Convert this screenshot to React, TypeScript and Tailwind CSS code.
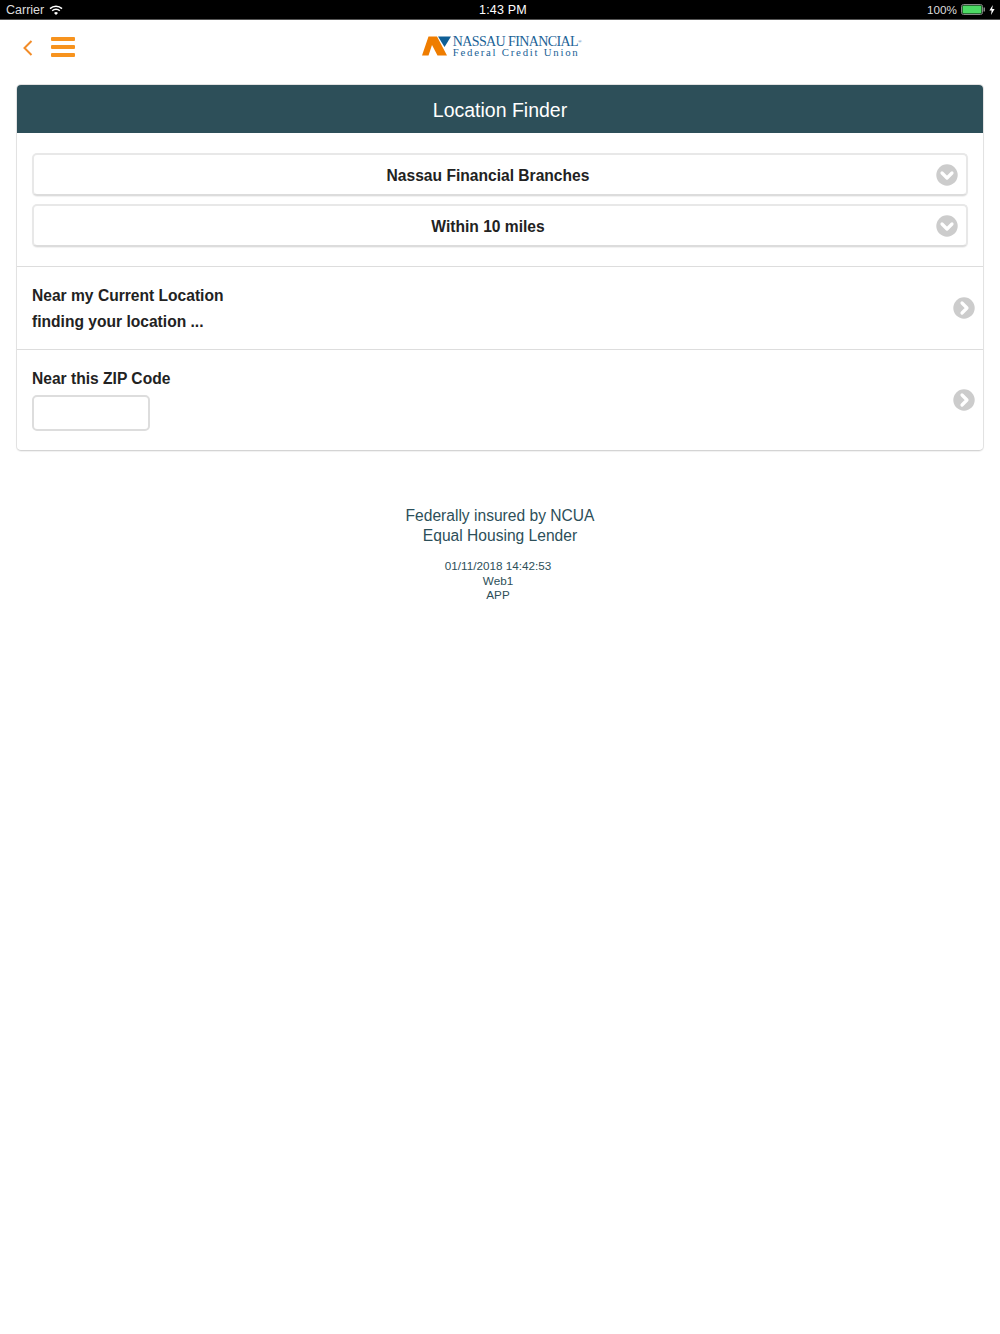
const sans = "font-['Liberation_Sans',Arial,sans-serif]";

function CircleIcon({ dir }: { dir: "down" | "right" }) {
  return (
    <svg width="22" height="22" viewBox="0 0 22 22" className="shrink-0">
      <circle cx="11" cy="11" r="10.7" fill="#cccccc" />
      <path
        d={dir === "down" ? "M6 9 L11 14 L16 9" : "M9 6 L14 11 L9 16"}
        fill="none"
        stroke="#ffffff"
        strokeWidth="3.2"
        strokeLinecap="round"
        strokeLinejoin="round"
      />
    </svg>
  );
}

function SelectBox({ label }: { label: string }) {
  return (
    <div className="h-[43px] rounded-[5px] border-2 border-[#e8e8e8] border-b-[#dcdcdc] shadow-[0_1px_1px_rgba(0,0,0,0.06)] bg-white flex items-center pl-2 pr-2">
      <span className="flex-1 text-center text-[15.6px] font-bold text-[#222222] pt-[2px] pr-[2px]">{label}</span>
      <CircleIcon dir="down" />
    </div>
  );
}

function Logo() {
  return (
    <div className="flex items-start">
      <svg width="30" height="20" viewBox="0 0 30 20">
        <polygon points="0,19.5 6.5,0.5 15,0.5 25,19.5 15.5,19.5 10,9 6.5,19.5" fill="#ef7d00" />
        <polygon points="16,0.5 29,0.5 22.5,11" fill="#0f5f96" />
      </svg>
      <div className="ml-px font-['Liberation_Serif',serif] text-[#1a6296]">
        <div className="h-[11px] text-[14px] leading-[11px] tracking-[-0.6px] whitespace-nowrap">
          NASSAU FINANCIAL<span className="text-[5px] align-top">®</span>
        </div>
        <div className="h-[10px] text-[10.8px] leading-[10px] tracking-[1.75px] whitespace-nowrap">Federal Credit Union</div>
      </div>
    </div>
  );
}

export default function App() {
  return (
    <div className={`${sans} min-h-[1334px] bg-white`}>
      <div className="relative h-5 bg-black border-b border-[#555555] text-white flex items-center justify-between pt-px pl-[6px] pr-[5px]">
        <div className="flex items-center gap-[5px]">
          <span className="text-[12.5px] text-[#dddddd]">Carrier</span>
          <svg width="14" height="11" viewBox="0 0 14 11">
            <path d="M1 3.6 A8.6 8.6 0 0 1 13 3.6" fill="none" stroke="#fff" strokeWidth="1.5" />
            <path d="M3.2 5.8 A5.5 5.5 0 0 1 10.8 5.8" fill="none" stroke="#fff" strokeWidth="1.5" />
            <path d="M7 10 L5 8 A2.8 2.8 0 0 1 9 8 Z" fill="#fff" />
          </svg>
        </div>
        <span className="absolute left-[479px] top-[2px] text-[12.5px] leading-4 tracking-[0.2px]">1:43 PM</span>
        <div className="flex items-center gap-[3px]">
          <span className="text-[11.7px] mr-px text-[#dddddd]">100%</span>
          <svg width="24" height="11" viewBox="0 0 24 11">
            <rect x="0.5" y="0.5" width="21" height="10" rx="2" fill="none" stroke="#888" />
            <rect x="1.5" y="1.5" width="19" height="8" rx="1" fill="#4cd964" />
            <rect x="22.5" y="3.5" width="1.5" height="4" fill="#888" />
          </svg>
          <svg width="6" height="10" viewBox="0 0 6 10" className="ml-px">
            <path d="M3.8 0 L0.4 5.6 H2.6 L2 10 L5.6 4 H3.2 Z" fill="#fff" />
          </svg>
        </div>
      </div>

      <div className="relative h-[64px] flex justify-center pt-4 pl-[3px]">
        <div className="absolute left-[23px] top-[17px] flex items-center gap-[18px]">
          <svg width="10" height="16" viewBox="0 0 10 16" className="mt-px">
            <path d="M8.5 1 L1.5 8 L8.5 15" fill="none" stroke="#f28c28" strokeWidth="2" />
          </svg>
          <div className="flex flex-col gap-[4px] w-6">
            <div className="h-1 bg-[#f7931e] rounded-[1px]" />
            <div className="h-1 bg-[#f7931e] rounded-[1px]" />
            <div className="h-1 bg-[#f7931e] rounded-[1px]" />
          </div>
        </div>
        <Logo />
      </div>

      <div className="mx-4 rounded-[5px] border border-[#e2e2e2] border-b-[#d4d4d4] shadow-[0_1px_1px_rgba(0,0,0,0.06)] bg-white overflow-hidden">
        <div className="h-12 pt-1 bg-[#2d4f59] text-white text-[19.5px] flex items-center justify-center">
          Location Finder
        </div>
        <div className="pt-5 pb-[19px] px-[15px] flex flex-col gap-2 border-b border-[#dddddd]">
          <SelectBox label="Nassau Financial Branches" />
          <SelectBox label="Within 10 miles" />
        </div>
        <div className="h-[83px] pl-[15px] pr-2 flex items-center justify-between border-b border-[#dddddd]">
          <div className="text-[15.6px] font-bold text-[#222222] leading-[26px] pt-[2px]">
            <div>Near my Current Location</div>
            <div>finding your location ...</div>
          </div>
          <CircleIcon dir="right" />
        </div>
        <div className="h-[100px] pl-[15px] pr-2 flex items-center justify-between">
          <div className="-mt-[4px]">
            <div className="text-[15.6px] font-bold text-[#222222] leading-[27px]">Near this ZIP Code</div>
            <input className="block mt-[3px] w-[118px] h-9 rounded-[5px] border-2 border-[#dddddd] bg-white" />
          </div>
          <CircleIcon dir="right" />
        </div>
      </div>

      <div className="mt-[55px] text-center text-[#2d4f59] text-[15.6px] leading-[20px]">
        <div>Federally insured by NCUA</div>
        <div>Equal Housing Lender</div>
      </div>
      <div className="mt-[13px] pr-1 text-center text-[#2d4f59] text-[11.7px] leading-[14.5px]">
        <div>01/11/2018 14:42:53</div>
        <div>Web1</div>
        <div>APP</div>
      </div>
    </div>
  );
}
